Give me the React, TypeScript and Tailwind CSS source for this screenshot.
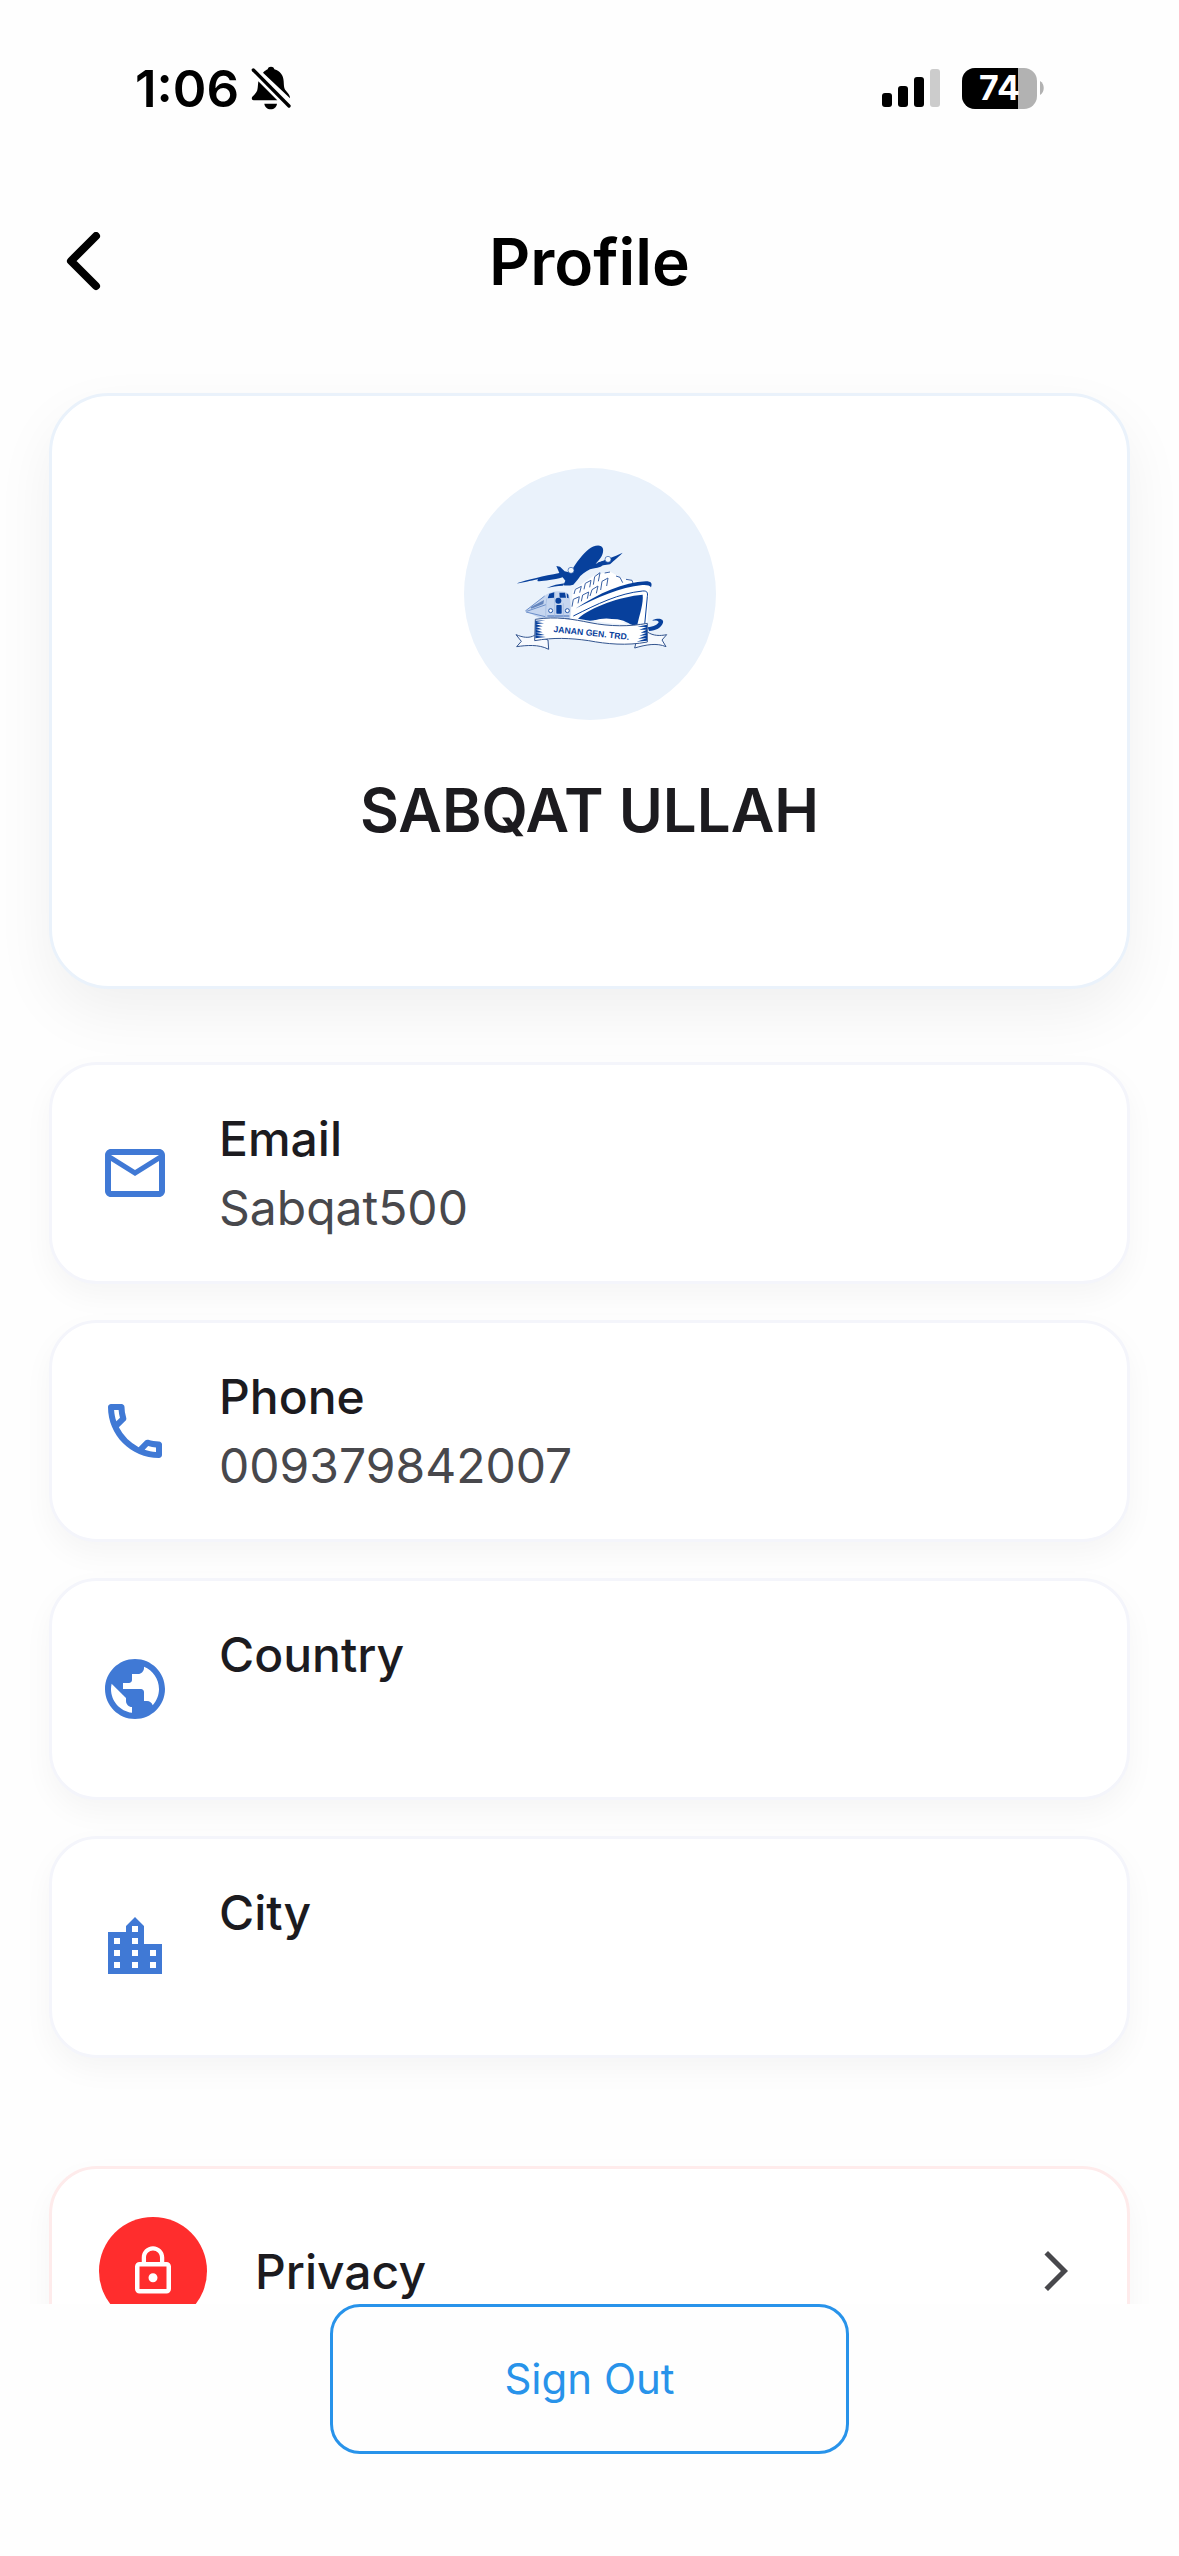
import type { ReactNode } from 'react';
import type { IconType } from 'react-icons';
import {
  MdArrowForwardIos,
  MdLocationCity,
  MdLockOutline,
  MdOutlineMailOutline,
  MdOutlinePhone,
  MdPublic,
} from 'react-icons/md';

interface Field {
  label: string;
  value: string;
  icon: IconType;
}

const fields: Field[] = [
  { label: 'Email', value: 'Sabqat500', icon: MdOutlineMailOutline },
  { label: 'Phone', value: '009379842007', icon: MdOutlinePhone },
  { label: 'Country', value: '', icon: MdPublic },
  { label: 'City', value: '', icon: MdLocationCity },
];

const BellOffIcon = () => (
  <svg width="40" height="44" viewBox="0 0 120 132" aria-hidden="true">
    <path
      d="M36 20 C42 14 46 12 50 10 C51 4 55 2 60 2 C65 2 69 4 70 10 C88 15 97 28 98 46 C99 64 99 68 106 76 C114 85 117 90 117 97 Z"
      fill="#000"
    />
    <path
      d="M22 46 L79 103 H8 C2 103 1 96 4 92 C12 84 19 78 20 66 Z"
      fill="#000"
    />
    <path d="M40 113 H78 C77 123 69 130 59 130 C49 130 41 123 40 113 Z" fill="#000" />
    <path d="M7 12 L114 120" stroke="#fff" strokeWidth="24" />
    <path d="M7 12 L114 120" stroke="#000" strokeWidth="10" strokeLinecap="round" />
  </svg>
);

const SignalIcon = () => (
  <svg width="58" height="38" viewBox="0 0 58 38" aria-hidden="true">
    <rect x="0" y="24" width="10" height="14" rx="3" />
    <rect x="16" y="17" width="10" height="21" rx="3" />
    <rect x="32" y="8" width="10" height="30" rx="3" />
    <rect x="48" y="0" width="10" height="38" rx="3" fill="#ccc" />
  </svg>
);

const Battery = ({ level }: { level: number }) => (
  <div className="flex items-center gap-[3px]">
    <div className="relative flex h-[41px] w-[75px] items-center justify-center overflow-hidden rounded-[13px] bg-[#b2b2b2]">
      <div
        className="absolute inset-y-0 left-0 bg-black"
        style={{ width: `${level}%` }}
      />
      <span className="relative text-[34px] leading-none font-bold text-white">
        {level}
      </span>
    </div>
    <svg width="4" height="14" viewBox="0 0 4 14" aria-hidden="true">
      <path d="M0 0 C5 3 5 11 0 14 Z" fill="#b2b2b2" />
    </svg>
  </div>
);

const CompanyLogo = () => (
  <svg
    width="160"
    height="122"
    viewBox="0 -21 480 366"
    fill="none"
    role="img"
    aria-label="Janan Gen. Trd."
  >
    {/* ship */}
    <path
      d="M182 238 L188 150 L250 108 L298 94 L342 118 L424 128 L418 150 L412 250 Z"
      fill="#fff"
    />
    <path
      d="M192 162 L196 148 L214 139 L209 158 M222 148 L226 130 L243 121 L239 142 M250 134 L254 110 L270 98 L265 124 M186 200 L190 178 L208 170 L204 190 M214 184 L218 165 L236 156 L232 176 M240 168 L246 149 L264 138 L259 160 M272 150 L276 124 L294 114 L290 138 M300 96 L284 99 M318 108 L330 112 L338 128 M348 118 L366 121 L370 132"
      stroke="#3b62a5"
      strokeWidth="3"
    />
    <path
      d="M196 206 C268 160 340 126 408 124 C423 124 428 130 423 142 C419 136 410 134 397 135 C330 142 262 172 196 206 Z"
      fill="#07409c"
    />
    <path
      d="M190 228 C262 192 326 160 398 153 C411 152 414 157 412 170 L404 254"
      stroke="#07409c"
      strokeWidth="3"
    />
    <path
      d="M204 236 C244 200 330 170 398 164 C401 190 389 222 381 258 C362 258 350 242 322 238 C290 236 262 240 240 242 Z"
      fill="#07409c"
    />
    <path d="M250 242 C290 230 320 236 352 254 L300 250 Z" fill="#fff" />
    <path
      d="M428 240 C448 232 462 238 459 248 C454 263 438 272 417 273 L413 262 C430 260 446 252 446 246 C443 241 436 241 428 242 Z"
      fill="#07409c"
    />

    {/* train */}
    <path
      d="M46 213 L104 168 C120 152 158 150 174 160 C184 172 184 216 179 240 L100 240 Z"
      fill="#c6d6ef"
    />
    <path
      d="M46 213 L104 168 M50 214 L108 194 M48 216 L106 230"
      stroke="#6c8fca"
      strokeWidth="3"
    />
    <path d="M62 202 L102 180 L100 192 L64 206 Z" fill="#6485bd" />
    <path d="M118 161 L133 157 L132 173 L113 175 Z" fill="#07409c" />
    <path d="M148 158 H165 L168 173 H149 Z" fill="#07409c" />
    <path d="M170 160 L175 164 L176 175 L171 173 Z" fill="#07409c" />
    <circle cx="145" cy="182" r="9" fill="#07409c" />
    <rect x="139" y="195" width="16" height="26" rx="2" fill="#07409c" />
    <circle cx="122" cy="212" r="6" fill="#fff" stroke="#2457a8" strokeWidth="3" />
    <circle cx="172" cy="212" r="6" fill="#fff" stroke="#2457a8" strokeWidth="3" />
    <path d="M112 228 H178 M110 236 H178" stroke="#6c8fca" strokeWidth="4" />
    <path
      d="M110 176 C108 196 106 214 108 236 M134 158 V238 M160 190 V238"
      stroke="#9fb8e0"
      strokeWidth="2"
    />

    {/* plane */}
    <path
      d="M188 86 C198 70 218 42 236 28 C250 16 274 10 279 26 C282 42 270 58 257 71 L278 64 C284 60 288 62 290 68 L272 80 C258 86 248 84 240 88 C226 96 212 104 204 118 L190 134 C180 137 168 137 160 136 L166 122 L158 112 C126 121 90 125 82 123 L84 118 C62 122 36 130 20 130 C52 119 102 108 148 99 L139 78 L150 80 L164 94 L174 96 Z"
      fill="#07409c"
    />
    <path d="M262 68 C284 60 312 50 338 38 C320 56 306 66 300 73 L280 76 Z" fill="#07409c" />
    <path d="M110 144 C128 136 146 132 164 130 L158 137 C142 137 126 141 110 144 Z" fill="#07409c" />
    <circle cx="183" cy="91" r="9" fill="#f4f8fd" stroke="#2457a8" strokeWidth="2" />
    <circle cx="294" cy="58" r="9" fill="#f4f8fd" stroke="#2457a8" strokeWidth="2" />

    {/* ribbon */}
    <g stroke="#33558f" strokeWidth="3" strokeLinejoin="round">
      <path
        d="M74 286 C56 296 38 292 18 284 L34 304 L20 320 C48 316 86 312 116 328 L114 300 Z"
        fill="#f7fafe"
      />
      <path
        d="M412 276 C430 288 450 288 470 284 L456 300 L468 320 C440 308 408 314 374 324 L378 308 Z"
        fill="#f7fafe"
      />
      <path
        d="M76 238 C140 228 190 238 240 248 C300 260 360 260 412 250 L412 306 C350 318 290 312 236 302 C180 294 130 292 74 302 Z"
        fill="#fff"
      />
    </g>
    <path
      d="M76 242 L106 241 L78 246 L102 250 L78 253 L98 259 L78 261 L96 268 L78 269 L98 277 L78 278 L104 285 L76 287 L108 291 L76 295 Z M411 254 L382 260 L410 261 L388 269 L410 269 L392 278 L410 278 L388 287 L410 286 L384 296 L410 295 L380 305 L411 302 Z"
      fill="#07409c"
    />
    <text
      x="130"
      y="276"
      fill="#07409c"
      fontFamily="'Liberation Sans Narrow', 'Liberation Sans', sans-serif"
      fontSize="26"
      fontWeight="700"
      transform="rotate(6 130 276)"
    >
      JANAN GEN. TRD.
    </text>
  </svg>
);

const StatusBar = () => (
  <div className="flex h-[176px] items-center justify-between px-[135px]">
    <div className="flex items-center gap-3">
      <span className="text-[51px] leading-none font-semibold">1:06</span>
      <BellOffIcon />
    </div>
    <div className="flex items-center gap-[22px]">
      <SignalIcon />
      <Battery level={74} />
    </div>
  </div>
);

const Header = () => (
  <header className="grid h-[172px] grid-cols-[1fr_auto_1fr] items-center px-[63px]">
    <button type="button" aria-label="Back" className="justify-self-start">
      <svg width="40" height="60" viewBox="0 0 40 60" fill="none" aria-hidden="true">
        <path
          d="M33 4 L8 29 L33 54"
          stroke="#000"
          strokeWidth="8"
          strokeLinecap="round"
          strokeLinejoin="round"
        />
      </svg>
    </button>
    <h1 className="text-[64px] leading-[80px] font-semibold">Profile</h1>
  </header>
);

const Card = ({ children }: { children: ReactNode }) => (
  <li className="flex min-h-[222px] items-center gap-12 rounded-[48px] border-3 border-[#f4f5fb] bg-white px-[47px] shadow-[0_12px_30px_rgba(0,0,0,0.04)]">
    {children}
  </li>
);

const App = () => {
  return (
    <div className="flex h-screen flex-col bg-[#fefefe] font-[Inter,'Liberation_Sans',sans-serif] text-black">
      <StatusBar />
      <Header />

      <main className="min-h-0 flex-1 overflow-y-auto px-[49px] pt-[45px] [scrollbar-width:none]">
        <section className="flex flex-col items-center rounded-[60px] border-3 border-[#eaf2fb] bg-white px-12 pt-[72px] pb-[140px] shadow-[0_24px_60px_rgba(0,0,0,0.06)]">
          <div className="flex size-[252px] items-center justify-center rounded-full bg-[#eaf2fb]">
            <CompanyLogo />
          </div>
          <h2 className="mt-[54px] text-[60px] leading-[72px] font-semibold text-[#1c1b1f]">
            SABQAT ULLAH
          </h2>
        </section>

        <ul className="mt-[73px] flex flex-col gap-9">
          {fields.map(({ label, value, icon: Icon }) => (
            <Card key={label}>
              <Icon className="size-[72px] shrink-0 text-[#4079d5]" />
              <dl className="min-w-0 text-[48px] leading-[69px]">
                <dt className="font-medium text-[#1c1b1f]">{label}</dt>
                <dd className="min-h-[69px] text-[#48484c]">{value}</dd>
              </dl>
            </Card>
          ))}
        </ul>

        <button
          type="button"
          className="mt-[108px] flex w-full items-center gap-12 rounded-[48px] border-3 border-[#feebeb] bg-white px-[47px] py-12 text-left shadow-[0_12px_30px_rgba(0,0,0,0.04)]"
        >
          <span className="flex size-[108px] items-center justify-center rounded-full bg-[#ff2d2d]">
            <MdLockOutline className="size-[54px] text-white" />
          </span>
          <span className="flex-1 text-[48px] leading-[69px] font-medium text-[#1c1b1f]">
            Privacy
          </span>
          <MdArrowForwardIos className="size-12 text-[#48484c]" />
        </button>
      </main>

      <footer className="flex justify-center pb-[102px]">
        <button
          type="button"
          className="h-[150px] w-[44%] rounded-[30px] border-3 border-[#2893ea] text-[42px] leading-[60px] text-[#2893ea]"
        >
          Sign Out
        </button>
      </footer>
    </div>
  );
};

export default App;
